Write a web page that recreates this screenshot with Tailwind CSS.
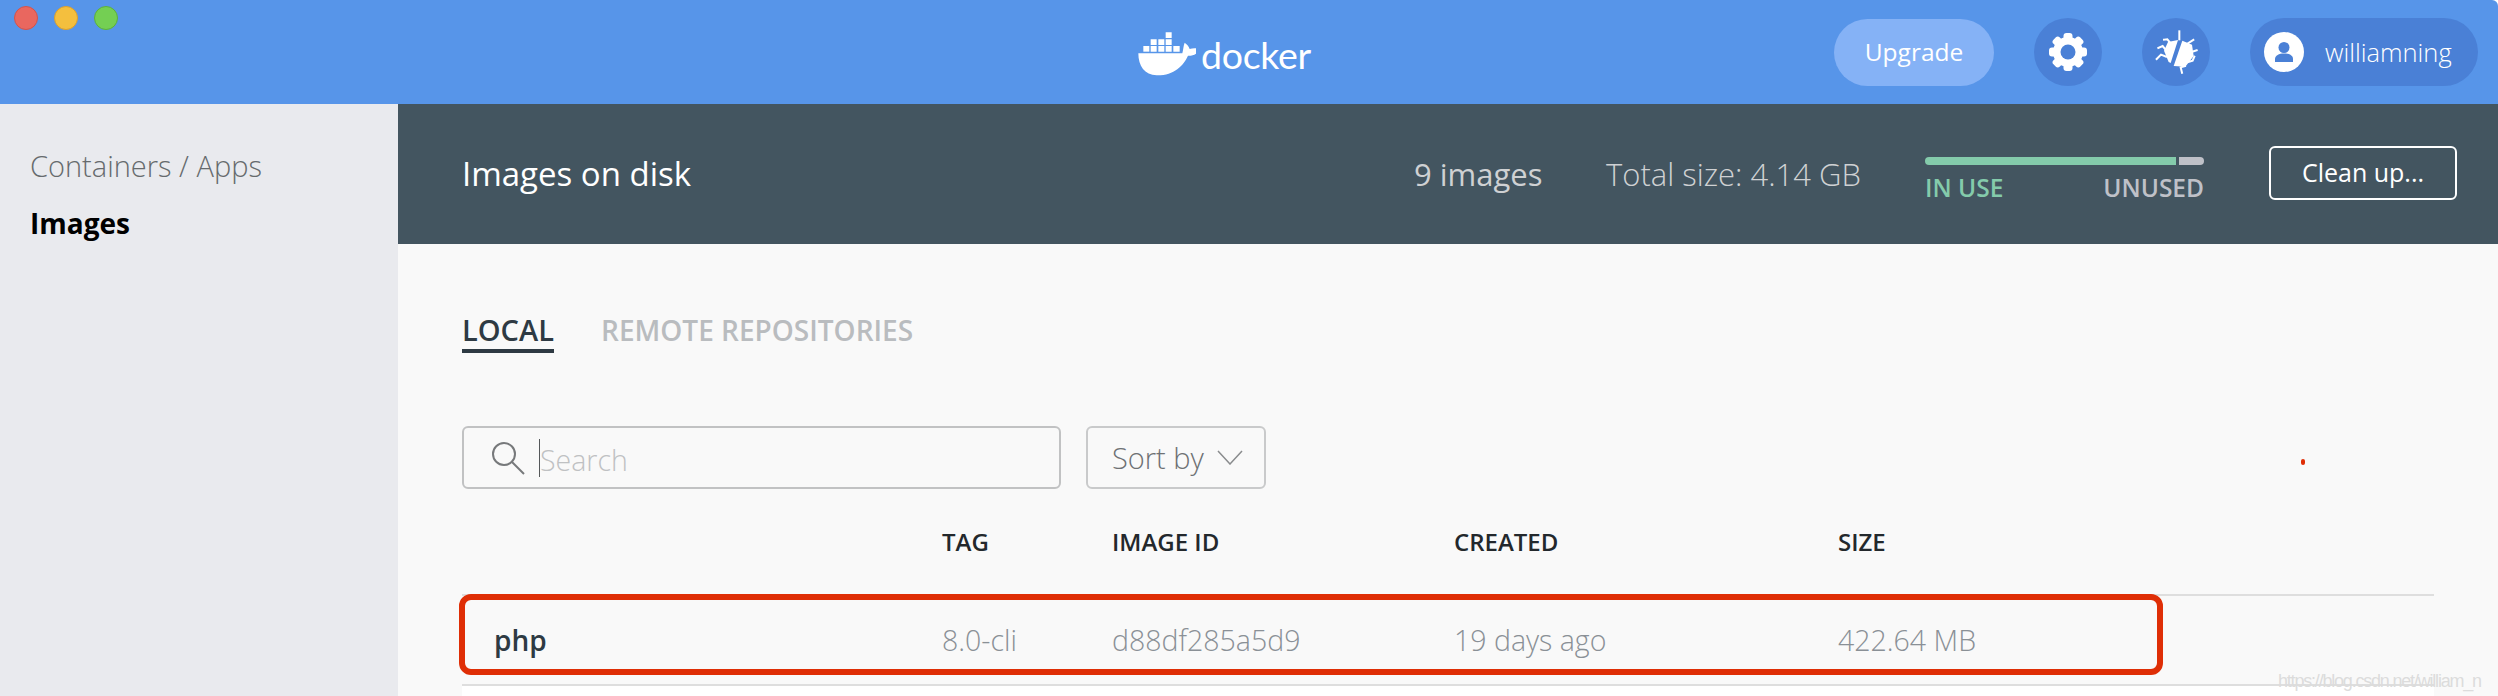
<!DOCTYPE html>
<html lang="en">
  <head>
    <meta charset="UTF-8" />
    <title>Docker Desktop - Images</title>
    <script src="https://cdn.jsdelivr.net/npm/@tailwindcss/browser@4"></script>
  </head>
  <body class="relative w-[2498px] h-[696px] overflow-hidden bg-white font-['Open_Sans',sans-serif]">
    <!-- title bar -->
    <header class="flex items-center h-[104px] bg-[#5795e9] rounded-tr-[6px]">
      <div class="flex self-start gap-[16px] w-[1138px] pl-[14px] pt-[6px]">
        <span class="w-[24px] h-[24px] rounded-full bg-[#e9675f] border border-[#d3534b]"></span>
        <span class="w-[24px] h-[24px] rounded-full bg-[#f4bf3e] border border-[#dca02c]"></span>
        <span class="w-[24px] h-[24px] rounded-full bg-[#74cf53] border border-[#5cb03c]"></span>
      </div>
      <div class="flex items-center">
        <svg width="66" height="54" viewBox="0 0 198 162" class="-ml-[8px] mt-[1px] text-white" fill="currentColor">
          <path d="M40 60h18v17H40z"/>
          <path d="M62 60h18v17H62zM85 60h18v17H85zM107 60h18v17h-18zM130 60h19v17h-19z"/>
          <path d="M62 40h18v17H62zM85 40h18v17H85zM107 40h18v17h-18zM107 19h18v17h-18z"/>
          <path d="M25 82h132c3-10 3-22 7-32 6 4 12 10 15 19 9-3 20-3 29 0-3 14-20 21-34 20-14 30-42 60-94 59-36-1-55-28-55-66z"/>
        </svg>
        <span class="text-white text-[37.5px] leading-none tracking-[-0.3px] ml-[5px] mt-[6px] font-['Lato',sans-serif] font-normal">docker</span>
      </div>
      <div class="flex items-center ml-auto pr-[20px]">
        <button class="w-[160px] h-[67px] rounded-full bg-[#85b2f6] text-white text-[24.5px] font-normal">Upgrade</button>
        <button class="flex items-center justify-center w-[68px] h-[68px] ml-[40px] rounded-full bg-[#4a80d6]">
          <svg width="40" height="40" viewBox="0 0 40 40" fill="#fff">
            <g>
              <rect x="15.5" y="1" width="9" height="38" rx="3"/>
              <rect x="15.5" y="1" width="9" height="38" rx="3" transform="rotate(45 20 20)"/>
              <rect x="15.5" y="1" width="9" height="38" rx="3" transform="rotate(90 20 20)"/>
              <rect x="15.5" y="1" width="9" height="38" rx="3" transform="rotate(135 20 20)"/>
            </g>
            <circle cx="20" cy="20" r="15" />
            <circle cx="20" cy="20" r="7.5" fill="#4a80d6"/>
          </svg>
        </button>
        <button class="flex items-center justify-center w-[68px] h-[68px] ml-[40px] rounded-full bg-[#4a80d6]">
          <svg width="68" height="68" viewBox="0 0 204 204" fill="#fff" stroke="#fff">
            <g transform="translate(-6 -6)">
              <path stroke="none" d="M114 72 84 78 72 104 86 138 92 141z"/>
              <path stroke="none" d="M127 74 156 86 161 120 136 152 101 150z"/>
              <g fill="none" stroke-width="6" stroke-linecap="square">
                <path d="M118 46v24"/>
                <path d="M160 72 144 82"/>
                <path d="M72 71 82 70 92 82"/>
                <path d="M55 96 68 90 78 102"/>
                <path d="M50 129 63 116 78 122"/>
                <path d="M170 103 155 108"/>
                <path d="M163 122 158 134 145 138"/>
                <path d="M126 170 122 154 135 150"/>
              </g>
            </g>
          </svg>
        </button>
        <div class="flex items-center w-[228px] h-[68px] ml-[40px] pl-[14px] rounded-full bg-[#4a80d6]">
          <span class="flex items-center justify-center w-[40px] h-[40px] rounded-full bg-white">
            <svg width="28" height="28" viewBox="0 0 28 28" fill="#4a80d6">
              <circle cx="14" cy="9.5" r="5.5"/>
              <path d="M5 24v-3c0-3.5 4-5.5 9-5.5s9 2 9 5.5v3z"/>
            </svg>
          </span>
          <span class="ml-[21px] text-white text-[25.5px] font-light">williamning</span>
        </div>
      </div>
    </header>

    <div class="flex h-[592px]">
      <!-- sidebar -->
      <aside class="w-[398px] bg-[#e9eaee] pl-[30px] pt-[43px]">
        <p class="text-[29px] leading-[37px] font-light text-[#666a6d]">Containers / Apps</p>
        <p class="mt-[21px] text-[28px] leading-[37px] font-bold text-black">Images</p>
      </aside>

      <main class="flex-1 bg-[#f9f9f9]">
        <!-- summary band -->
        <section class="flex items-center h-[140px] pl-[64px] pr-[41px] bg-[#435560]">
          <h1 class="flex-1 text-[33px] font-normal text-white">Images on disk</h1>
          <span class="w-[192px] text-[31px] font-normal text-[#cfd1d3]">9 images</span>
          <span class="w-[319px] text-[31px] font-light text-[#cfd1d3]">Total size: 4.14 GB</span>
          <div class="w-[344px] mt-[11px]">
            <div class="flex gap-[3px] w-[279px] h-[8px]">
              <span class="w-[251px] rounded-l-full bg-[#84cbab]"></span>
              <span class="w-[25px] rounded-r-full bg-[#bfc1c8]"></span>
            </div>
            <div class="flex justify-between w-[279px] mt-[8px] text-[24.5px] leading-[30px] font-semibold">
              <span class="text-[#84cbab]">IN USE</span>
              <span class="text-[#bfc1c8]">UNUSED</span>
            </div>
          </div>
          <button class="w-[188px] h-[54px] -mt-[2px] rounded-[6px] border-2 border-white text-white text-[25px]">Clean up...</button>
        </section>

        <!-- tabs -->
        <nav class="flex gap-[47px] pl-[64px] pt-[65px] h-[145px]">
          <span class="w-[92px] h-[44px] border-b-4 border-[#2e3a43] text-[#2e3a43] text-[29px] leading-[42px] font-semibold">LOCAL</span>
          <span class="h-[44px] text-[#b9bcbf] text-[28px] leading-[42px] font-semibold">REMOTE REPOSITORIES</span>
        </nav>

        <!-- search and sort -->
        <div class="flex gap-[25px] pl-[64px] h-[63px] mt-[37px]">
          <div class="flex items-center w-[599px] rounded-[6px] border-2 border-[#c1c2c3] pl-[26px]">
            <svg width="36" height="36" viewBox="0 0 36 36" fill="none" stroke="#77797b" stroke-width="2">
              <circle cx="14" cy="14" r="11"/>
              <path d="M22 22 34 34"/>
            </svg>
            <span class="w-px h-[38px] ml-[13px] bg-[#55585a]"></span>
            <span class="mt-[5px] text-[28.5px] font-light text-[#bfc1c3]">Search</span>
          </div>
          <div class="flex items-center w-[180px] rounded-[6px] border-2 border-[#c9cacb] pl-[24px]">
            <span class="text-[29px] font-light text-[#6e7174]">Sort by</span>
            <svg width="26" height="15" viewBox="0 0 26 15" fill="none" stroke="#8a8c8e" stroke-width="1.5" class="ml-[13px]">
              <path d="M1 1 13 14 25 1"/>
            </svg>
          </div>
        </div>

        <!-- table -->
        <div class="grid grid-cols-[480px_170px_342px_384px_1fr] items-center w-[1972px] h-[107px] ml-[64px] border-b-2 border-[#dedede] text-[24px] font-semibold text-[#23282c]">
          <span></span>
          <span>TAG</span>
          <span>IMAGE ID</span>
          <span>CREATED</span>
          <span>SIZE</span>
        </div>
        <div class="grid grid-cols-[480px_170px_342px_384px_1fr] items-center w-[1972px] h-[90px] ml-[64px] border-b-2 border-[#dedede] text-[28.5px] font-light text-[#8a9096]">
          <span class="pl-[32px] text-[28px] font-semibold text-[#2e3a43]">php</span>
          <span>8.0-cli</span>
          <span>d88df285a5d9</span>
          <span>19 days ago</span>
          <span>422.64 MB</span>
        </div>
        <div class="w-[1972px] h-[12px] ml-[64px] bg-white"></div>
      </main>
    </div>

    <!-- annotations over the screenshot -->
    <div class="absolute left-[459px] top-[594px] w-[1704px] h-[81px] rounded-[12px] border-[6px] border-[#df2e06]"></div>
    <span class="absolute left-[2301px] top-[459px] w-[4px] h-[6px] rounded-full bg-[#df2e06]"></span>
    <span class="absolute left-[2278px] top-[668px] text-[18px] tracking-[-1.2px] font-['Liberation_Sans',sans-serif] text-[#dcdcdc]">https://blog.csdn.net/william_n</span>
  </body>
</html>
